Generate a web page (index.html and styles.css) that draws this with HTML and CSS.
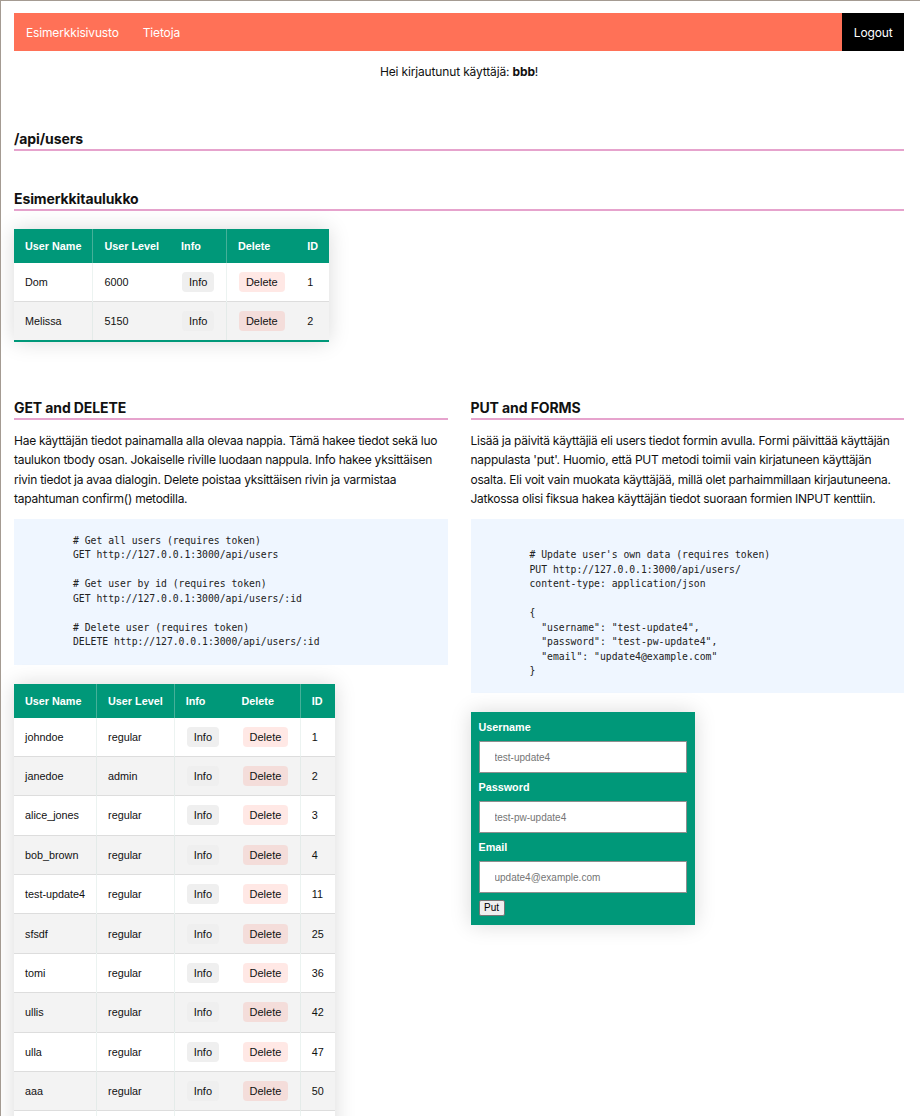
FILE: index.html
```html
<!DOCTYPE html>
<html lang="fi">
<head>
<meta charset="utf-8">
<title>Esimerkkisivusto</title>
<link rel="stylesheet" href="styles.css">
</head>
<body>
<div class="page">
  <nav class="topnav">
    <a class="nav-link" href="#">Esimerkkisivusto</a>
    <a class="nav-link" href="#">Tietoja</a>
    <a class="nav-logout" href="#">Logout</a>
  </nav>

  <p class="greeting">Hei kirjautunut käyttäjä: <strong>bbb</strong>!</p>

  <h2 class="section-title title-api">/api/users</h2>

  <h2 class="section-title title-table">Esimerkkitaulukko</h2>

  <table class="styled-table table-a">
    <thead>
      <tr><th>User Name</th><th>User Level</th><th>Info</th><th>Delete</th><th>ID</th></tr>
    </thead>
    <tbody>
      <tr><td>Dom</td><td>6000</td><td><button class="btn btn-info">Info</button></td><td><button class="btn btn-delete">Delete</button></td><td>1</td></tr>
      <tr><td>Melissa</td><td>5150</td><td><button class="btn btn-info">Info</button></td><td><button class="btn btn-delete">Delete</button></td><td>2</td></tr>
    </tbody>
  </table>

  <div class="columns">
    <section class="col">
      <h2 class="section-title">GET and DELETE</h2>
      <p class="lead">Hae käyttäjän tiedot painamalla alla olevaa nappia. Tämä hakee tiedot sekä luo taulukon tbody osan. Jokaiselle riville luodaan nappula. Info hakee yksittäisen rivin tiedot ja avaa dialogin. Delete poistaa yksittäisen rivin ja varmistaa tapahtuman confirm() metodilla.</p>
<pre class="code">        # Get all users (requires token)
        GET http://127.0.0.1:3000/api/users

        # Get user by id (requires token)
        GET http://127.0.0.1:3000/api/users/:id

        # Delete user (requires token)
        DELETE http://127.0.0.1:3000/api/users/:id</pre>
      <table class="styled-table table-b">
        <thead>
          <tr><th>User Name</th><th>User Level</th><th>Info</th><th>Delete</th><th>ID</th></tr>
        </thead>
        <tbody>
          <tr><td>johndoe</td><td>regular</td><td><button class="btn btn-info">Info</button></td><td><button class="btn btn-delete">Delete</button></td><td>1</td></tr>
          <tr><td>janedoe</td><td>admin</td><td><button class="btn btn-info">Info</button></td><td><button class="btn btn-delete">Delete</button></td><td>2</td></tr>
          <tr><td>alice_jones</td><td>regular</td><td><button class="btn btn-info">Info</button></td><td><button class="btn btn-delete">Delete</button></td><td>3</td></tr>
          <tr><td>bob_brown</td><td>regular</td><td><button class="btn btn-info">Info</button></td><td><button class="btn btn-delete">Delete</button></td><td>4</td></tr>
          <tr><td>test-update4</td><td>regular</td><td><button class="btn btn-info">Info</button></td><td><button class="btn btn-delete">Delete</button></td><td>11</td></tr>
          <tr><td>sfsdf</td><td>regular</td><td><button class="btn btn-info">Info</button></td><td><button class="btn btn-delete">Delete</button></td><td>25</td></tr>
          <tr><td>tomi</td><td>regular</td><td><button class="btn btn-info">Info</button></td><td><button class="btn btn-delete">Delete</button></td><td>36</td></tr>
          <tr><td>ullis</td><td>regular</td><td><button class="btn btn-info">Info</button></td><td><button class="btn btn-delete">Delete</button></td><td>42</td></tr>
          <tr><td>ulla</td><td>regular</td><td><button class="btn btn-info">Info</button></td><td><button class="btn btn-delete">Delete</button></td><td>47</td></tr>
          <tr><td>aaa</td><td>regular</td><td><button class="btn btn-info">Info</button></td><td><button class="btn btn-delete">Delete</button></td><td>50</td></tr>
          <tr><td>bbb</td><td>regular</td><td><button class="btn btn-info">Info</button></td><td><button class="btn btn-delete">Delete</button></td><td>51</td></tr>
        </tbody>
      </table>
    </section>

    <section class="col">
      <h2 class="section-title">PUT and FORMS</h2>
      <p class="lead">Lisää ja päivitä käyttäjiä eli users tiedot formin avulla. Formi päivittää käyttäjän nappulasta 'put'. Huomio, että PUT metodi toimii vain kirjatuneen käyttäjän osalta. Eli voit vain muokata käyttäjää, millä olet parhaimmillaan kirjautuneena. Jatkossa olisi fiksua hakea käyttäjän tiedot suoraan formien INPUT kenttiin.</p>
<pre class="code">

        # Update user's own data (requires token)
        PUT http://127.0.0.1:3000/api/users/
        content-type: application/json

        {
          "username": "test-update4",
          "password": "test-pw-update4",
          "email": "update4@example.com"
        }</pre>
      <form class="put-form">
        <label class="form-label" for="username">Username</label>
        <input class="form-input" id="username" type="text" placeholder="test-update4">
        <label class="form-label" for="password">Password</label>
        <input class="form-input" id="password" type="text" placeholder="test-pw-update4">
        <label class="form-label" for="email">Email</label>
        <input class="form-input" id="email" type="text" placeholder="update4@example.com">
        <button class="put-btn" type="button">Put</button>
      </form>
    </section>
  </div>
</div>
</body>
</html>
```

FILE: styles.css
```css
html {
  border-top: 1px solid #a49b92;
  border-left: 1px solid #a49b92;
}

body {
  margin: 0;
  font-family: Inter, "Noto Sans", sans-serif;
  font-size: 12px;
  letter-spacing: -0.15px;
  color: #111;
  background: #fff;
}

.page {
  padding: 12px 16px 0 13px;
}

/* nav */
.topnav {
  display: flex;
  align-items: stretch;
  height: 38px;
  background: #ff7157;
}

.nav-link,
.nav-logout {
  display: flex;
  align-items: center;
  color: #fff;
  text-decoration: none;
  padding: 0 12px;
}

.nav-logout {
  margin-left: auto;
  background: #000;
  padding: 0 11.5px;
}

.greeting {
  margin: 11px 0 0;
  line-height: 19.2px;
  text-align: center;
}

/* headings */
.section-title {
  margin: 0;
  font-size: 14px;
  letter-spacing: -0.1px;
  line-height: 18px;
  font-weight: 700;
  padding-bottom: 1px;
  border-bottom: 2px solid #e6a3cd;
}

.title-api {
  margin-top: 49px;
}

.title-table {
  margin-top: 38.5px;
}

/* tables */
.styled-table {
  border-collapse: collapse;
  font-family: "Liberation Sans", Arial, sans-serif;
  font-size: 10.8px;
  letter-spacing: 0;
  box-shadow: 0 0 20px rgba(0, 0, 0, 0.15);
}

.table-a {
  margin-top: 18px;
}

.table-b {
  margin-top: 19px;
}

.styled-table th {
  background: #009879;
  color: #fff;
  font-weight: 700;
  text-align: left;
  padding: 11px 11px;
  line-height: 12px;
}

.styled-table td {
  padding: 9.2px 11px;
  line-height: 20px;
  vertical-align: middle;
  white-space: nowrap;
}

.styled-table td:nth-child(3),
.styled-table td:nth-child(4) {
  padding-left: 12px;
  padding-right: 11.5px;
}

.styled-table tbody tr {
  border-bottom: 1px solid #dddddd;
}

.styled-table tbody tr:nth-of-type(even) {
  background: #f3f3f3;
}

.styled-table tbody tr:last-of-type {
  border-bottom: 2px solid #009879;
}

.table-a th:nth-child(2),
.table-a td:nth-child(2),
.table-a th:nth-child(4),
.table-a td:nth-child(4),
.table-b th:nth-child(2),
.table-b td:nth-child(2),
.table-b th:nth-child(3),
.table-b td:nth-child(3),
.table-b th:nth-child(5),
.table-b td:nth-child(5) {
  border-left: 1px solid rgba(200, 220, 215, 0.35);
}

.btn {
  display: inline-block;
  vertical-align: top;
  height: 20px;
  line-height: 20px;
  padding: 0 7px;
  border: 0;
  border-radius: 4px;
  font-family: "Liberation Sans", Arial, sans-serif;
  font-size: 11px;
  color: #111;
}

.btn-info {
  background: #efefef;
}

.btn-delete {
  background: rgba(255, 100, 80, 0.15);
}

/* columns */
.columns {
  display: grid;
  grid-template-columns: 1fr 1fr;
  column-gap: 23px;
  align-items: start;
  margin-top: 57px;
}

.col {
  min-width: 0;
}

.lead {
  margin: 10.5px 0 0;
  line-height: 19.3px;
  letter-spacing: -0.26px;
}

.code {
  margin: 10.4px 0 0;
  padding: 15.5px 12px 15px;
  background: #eff6ff;
  font-family: "DejaVu Sans Mono", "Liberation Mono", monospace;
  font-size: 9.75px;
  letter-spacing: 0;
  line-height: 14.43px;
  color: #222;
  white-space: pre;
}

/* form */
.put-form {
  margin-top: 19px;
  width: 224px;
  box-sizing: border-box;
  padding: 8px 8px 9px;
  background: #009879;
  box-shadow: 0 0 20px rgba(0, 0, 0, 0.15);
  display: flex;
  flex-direction: column;
  gap: 7px;
}

.form-label {
  color: #fff;
  font-family: "Liberation Sans", Arial, sans-serif;
  font-size: 10.8px;
  font-weight: 700;
  letter-spacing: 0;
  line-height: 14px;
}

.form-input {
  box-sizing: border-box;
  width: 100%;
  height: 32px;
  margin: 0;
  padding: 0 15px;
  border: 1px solid #8f8f8f;
  background: #fff;
  font-family: "Liberation Sans", Arial, sans-serif;
  font-size: 10px;
  letter-spacing: 0;
}

.form-input::placeholder {
  color: #757575;
}

.put-btn {
  align-self: flex-start;
  height: 16px;
  margin: 0;
  padding: 0 4.5px;
  border: 1px solid #767676;
  border-radius: 2px;
  background: #efefef;
  font-family: "Liberation Sans", Arial, sans-serif;
  font-size: 10px;
  letter-spacing: 0;
  line-height: 14px;
  color: #000;
}
```
